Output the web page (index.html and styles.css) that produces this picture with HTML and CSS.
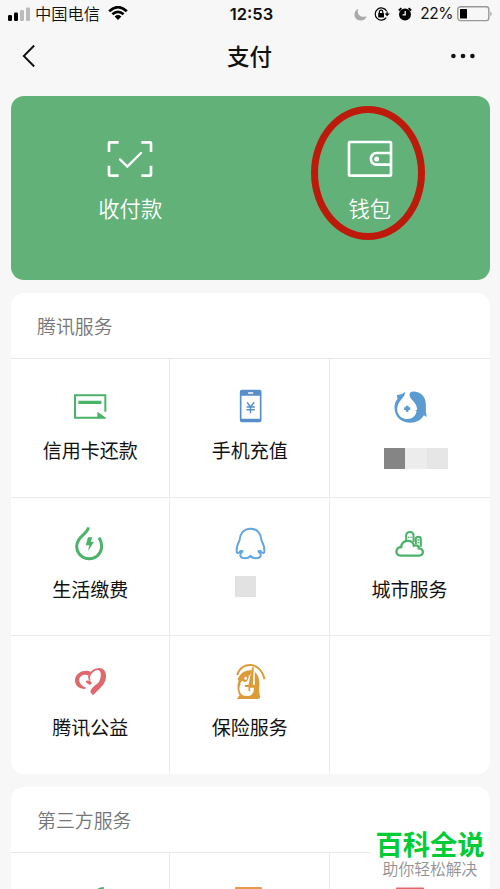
FILE: index.html
```html
<!DOCTYPE html>
<html lang="zh-CN">
<head>
<meta charset="utf-8">
<title>支付</title>
<link rel="stylesheet" href="styles.css">
</head>
<body>
<div class="screen">
  <header class="status">
    <div class="status-left">
      <svg class="signal" viewBox="0 0 22 14"><rect x="0" y="8" width="4" height="6" rx="1.2"/><rect x="6" y="5.5" width="4" height="8.5" rx="1.2"/><rect class="dim" x="12" y="3" width="4" height="11" rx="1.2"/><rect class="dim" x="18" y="0.5" width="4" height="13.5" rx="1.2"/></svg>
      <span class="carrier">中国电信</span>
      <svg class="wifi" viewBox="0 0 20 14"><path class="wave" d="M1.2 5.2Q10-2.8 18.8 5.2M4.4 8.3Q10 3.4 15.6 8.3"/><path d="M6.6 10.5Q10 7.6 13.4 10.5L10 13.9Z"/></svg>
    </div>
    <span class="clock">12:53</span>
    <div class="status-right">
      <svg class="moon" viewBox="0 0 14 14"><path d="M4.6 .8C-1.500 3.300-.8 13.500 7 13.500 10.500 13.500 12.800 11.600 13.500 8.800 7.500 11.500 2.300 6.500 4.600 .8Z"/></svg>
      <svg class="lock" viewBox="0 0 16 14"><path class="ring" d="M12.6 4A6.1 6.1 0 1 0 12.2 10.7M13.1 4.4V7.2"/><path d="M10.6 6.4H15.7L13.1 9.2Z"/><rect x="4.2" y="6" width="5.8" height="4.4" rx=".5"/><path class="ring" d="M5.4 6V4.8a1.7 1.7 0 0 1 3.4 0V6"/></svg>
      <svg class="alarm" viewBox="0 0 14 14"><circle cx="7" cy="7.4" r="6"/><path class="ear" d="M.8 3.5 3.4 1.2M13.2 3.5 10.6 1.2"/><path class="hand" d="M7.2 4V7.8H4.6"/></svg>
      <span class="percent">22%</span>
      <svg class="battery" viewBox="0 0 36 16"><rect class="shell" x=".8" y=".8" width="31" height="13.8" rx="2.6"/><rect x="3" y="3" width="7" height="9.5" rx=".6"/><path class="cap" d="M33.4 5.2Q35.8 7.7 33.4 10.2Z"/></svg>
    </div>
  </header>

  <nav class="nav">
    <svg class="back" viewBox="0 0 14 24"><path d="M12.2 1.5 1.8 12 12.2 22.5"/></svg>
    <h1>支付</h1>
    <svg class="more" viewBox="0 0 24 6"><circle cx="2.4" cy="3" r="2.3"/><circle cx="12" cy="3" r="2.3"/><circle cx="21.4" cy="3" r="2.3"/></svg>
  </nav>

  <main>
    <section class="hero">
      <div class="hero-item">
        <svg viewBox="82 150 138 114"><path d="M117 157H91Q88 157 88 160V186M185 157H211Q214 157 214 160V186M117 257H91Q88 257 88 254V227M185 257H211Q214 257 214 254V227"/><path class="round" d="M121 208 143 230 184 189"/></svg>
        <span>收付款</span>
      </div>
      <div class="hero-item">
        <svg viewBox="170 150 138 114"><rect x="176" y="156" width="126" height="101" rx="3"/><path d="M302 189H259A17.500 17.500 0 0 0 259 224H302"/><circle class="dot" cx="259" cy="207" r="7.500"/></svg>
        <span>钱包</span>
        <i class="highlight"></i>
      </div>
    </section>

    <section class="card">
      <h2>腾讯服务</h2>
      <div class="grid">
        <div class="cell green">
          <svg viewBox="210 318 120 120"><path class="line" d="M316 395V346H225V413H296"/><path d="M235 362H304V372H235ZM292 395 318 413V416H292Z"/></svg>
          <span>信用卡还款</span>
        </div>
        <div class="cell phone">
          <svg viewBox="88.500 48 120 120"><path fill-rule="evenodd" d="M124 59H177Q183 59 183 65V151Q183 157 177 157H124Q118 157 118 151V65Q118 59 124 59ZM123 77V146H178V77ZM143 67V71H158V67Z"/><path class="yen" d="M140 97 150 111 161 97M150 111V130M138 111H163M138 119H163"/></svg>
          <span>手机充值</span>
        </div>
        <div class="cell blue">
          <svg viewBox="118.500 48 120 120"><path d="M139 75Q153 76 163 66C166 82 141 91 140 116C140 135 153 147 170 147C186 147 197 137 198 123L194 121 200 119C199 94 178 91 177 74C177 63 190 63 202 67C220 74 228 90 226 114Q225 126 229 141L220 136C212 151 197 158 180 158C151 158 132 138 132 113C132 101 135 94 141 88Z"/><path d="M166 107H174V112H179V120H174V125H166V120H161V112H166Z"/></svg>
          <div class="mosaic"><i></i><i></i><i></i></div>
        </div>
        <div class="cell green">
          <svg viewBox="120 45 120 120"><path class="thick" d="M175 52C174 72 140 78 140 109A37.500 37.500 0 0 0 215 109Q215 94 207 83"/><path d="M174 82H187L182 95H192L174 124 178 106H167Z"/></svg>
          <span>生活缴费</span>
        </div>
        <div class="cell sky">
          <svg viewBox="598.500 45 120 120"><path class="qq" d="M660 56C639 56 628 72 627 91C622 101 616 114 619 127Q623 132 630 123L638 124Q632 126 630 132C625 148 652 147 660 138C668 147 695 148 690 132Q688 126 682 124L690 123Q697 132 701 127C704 114 698 101 693 91C692 72 681 56 660 56Z"/></svg>
          <div class="mosaic single"><i></i></div>
        </div>
        <div class="cell green">
          <svg viewBox="118.500 45 120 120"><path class="city" d="M150 137C133 137 134 111 152 111C155 87 187 88 190 107C204 103 206 112 205 115C221 116 221 137 206 137Z"/><path class="tower" d="M167 93V74Q170 66 178 66Q187 66 189 74V96M196 102V84Q198 80 204 80Q210 80 211 85V110"/><path class="windows" d="M172 82H176M180 82H184M201 90H207M201 98H207"/></svg>
          <span>城市服务</span>
        </div>
        <div class="cell red">
          <svg viewBox="90 39 120 120"><path d="M152 65C136 58 105 66 105 92C105 105 116 116 135 117L138 113C126 108 118 101 118 90C118 77 132 71 147 76Z"/><path d="M137 93Q145 90 151 94Q156 96 155 101Q151 106 146 103Q139 102 137 93Z"/><path d="M144 80C148 65 162 54 178 54C192 55 199 66 198 80C197 105 175 117 159 136L151 126C153 114 166 106 174 99C183 90 187 64 175 60C163 59 153 71 149 83L152 91 147 92Z"/></svg>
          <span>腾讯公益</span>
        </div>
        <div class="cell gold">
          <svg viewBox="568.500 39 120 120"><path class="umbrella" d="M590 75C602 34 660 32 672 88"/><path fill-rule="evenodd" d="M592 86C602 68 614 60 632 61V72C627 72 624 79 623 87Q621 96 613 97L606 92Q598 96 600 104C593 114 598 130 606 136Q613 138 620 138C636 138 641 126 640 113H629V124H624V111H613V105H624L635 52H640L637 104H643V66C656 76 658 92 656 112Q655 128 659 140Q660 147 650 147H591Q590 140 597 137C590 121 589 104 594 93ZM611 85A4.500 4.500 0 1 0 620 85A4.500 4.500 0 1 0 611 85Z"/></svg>
          <span>保险服务</span>
        </div>
        <div class="cell"></div>
      </div>
    </section>

    <section class="card">
      <h2>第三方服务</h2>
      <div class="grid">
        <div class="cell green"><svg viewBox="0 0 40 40"><path d="M27 9Q30 7 34 7Q33 18 20 20Q22 12 27 9Z"/></svg></div>
        <div class="cell orange"><svg viewBox="0 0 40 40"><rect x="5" y="7" width="27" height="28" rx="1"/></svg></div>
        <div class="cell red"><svg viewBox="0 0 40 40"><rect x="6" y="7.500" width="28" height="28" rx="1"/></svg></div>
      </div>
    </section>
  </main>
  <aside class="watermark"><strong>百科全说</strong><span>助你轻松解决</span></aside>
</div>
</body>
</html>
```
FILE: styles.css
```css
* { box-sizing: border-box; }
body {
  margin: 0;
  background: #f7f7f7;
  color: #111;
  font-family: "Noto Sans CJK SC", sans-serif;
}
svg { display: block; flex: none; }
.screen { position: relative; height: 889px; overflow: hidden; }

.status {
  display: grid;
  grid-template-columns: 1fr auto 1fr;
  align-items: center;
  height: 28px;
  padding: 0 7px 0 8px;
}
.status-left, .status-right { display: flex; align-items: center; }
.status-right { justify-content: flex-end; }
.signal { width: 22px; height: 14px; margin-top: -1px; }
.dim { fill: #bbb; }
.carrier { margin-left: 5px; font-size: 16.300px; font-weight: 350; line-height: 26px; margin-top: -2px; }
.wifi { width: 20px; height: 14px; margin-left: 8px; margin-top: -2px; }
.wave { fill: none; stroke: #000; stroke-width: 2.700; }
.clock { padding-left: 2px; font: 600 16.500px/28px Inter, sans-serif; }
.moon { width: 13px; height: 13px; fill: #aaa; }
.lock { width: 16px; height: 14px; margin-left: 7px; }
.ring { fill: none; stroke: #000; stroke-width: 1.200; }
.alarm { width: 14px; height: 14px; margin-left: 8px; }
.ear { stroke: #000; stroke-width: 1.800; }
.hand { fill: none; stroke: #fff; stroke-width: 1.200; }
.percent { margin-left: 8px; font: 15.500px/28px Inter, sans-serif; letter-spacing: -.5px; }
.battery { width: 36px; height: 16px; margin-left: 4px; }
.shell { fill: none; stroke: #999; stroke-width: 1.400; }
.cap { fill: #999; }

.nav {
  display: grid;
  grid-template-columns: 1fr auto 1fr;
  align-items: center;
  height: 56px;
  padding: 0 25px 0 22px;
}
.nav h1 { margin: -2px -1px 0 1px; font-size: 22.500px; font-weight: 500; line-height: 54px; }
.back { width: 14px; height: 24px; fill: none; stroke: #111; stroke-width: 1.900; }
.more { width: 24px; height: 6px; justify-self: end; fill: #111; }

main { padding: 12px 10.500px 0 10.500px; }
.hero {
  display: grid;
  grid-template-columns: 1fr 1fr;
  height: 184px;
  border-radius: 13px;
  background: #61b179;
}
.hero-item {
  position: relative;
  display: flex;
  flex-direction: column;
  align-items: center;
  padding-top: 44px;
  color: #fff;
  font-size: 21.300px;
  font-weight: 350;
  line-height: 30px;
}
.hero-item svg { width: 46px; height: 38px; margin-bottom: 15px; fill: none; stroke: #fff; stroke-width: 8; }
.hero-item .round { stroke-linecap: round; stroke-width: 7; }
.hero-item .dot { fill: #fff; stroke: none; }
.highlight {
  position: absolute;
  top: 10px;
  left: 61px;
  width: 114px;
  height: 134px;
  border: 7.500px solid #be1a0b;
  border-radius: 50%;
}

.card { margin-top: 13px; overflow: hidden; border-radius: 13px; background: #fff; }
.card h2 {
  height: 66px;
  margin: 0;
  padding-left: 26.500px;
  border-bottom: 1px solid #e8e8e8;
  color: #747679;
  font-size: 18.900px;
  font-weight: 350;
  line-height: 66px;
}
.grid { display: grid; grid-template-columns: 159px 160px 1fr; grid-template-rows: 139px 138px 138px; }
.cell {
  display: flex;
  flex-direction: column;
  align-items: center;
  padding: 27px 0 0 1.500px;
  border-right: 1px solid #ebebeb;
  border-bottom: 1px solid #ebebeb;
  fill: currentColor;
}
.cell:nth-child(3n) { padding-left: 0; border-right: 0; }
.cell:nth-child(n+7) { border-bottom: 0; }
.cell svg { width: 40px; height: 40px; margin-bottom: 10px; }
.cell span { color: #111; font-size: 19px; line-height: 28px; white-space: nowrap; }
.green { color: #4bb369; }
.phone { color: #588fcb; }
.blue { color: #5a9bd1; }
.sky { color: #62a5df; }
.red { color: #de686b; }
.gold { color: #dc9a38; }
.orange { color: #e69a4b; }
.line, .thick, .yen, .qq, .city, .tower, .windows, .umbrella { fill: none; stroke: currentColor; }
.line { stroke-width: 6; }
.thick { stroke-width: 9; }
.yen { stroke-width: 4.500; }
.qq { stroke-width: 6; }
.city { stroke-width: 7; }
.tower { stroke-width: 6; }
.windows { stroke-width: 4; }
.umbrella { stroke-width: 6; }

.mosaic { display: flex; margin: 12px 0 0 13px; }
.mosaic i { width: 21.500px; height: 21px; background: #ececec; }
.mosaic i:first-child { background: #858585; }
.mosaic i:last-child { background: #e6e6e6; }
.mosaic.single { margin: 1px 9px 0 0; }
.mosaic.single i { background: #e2e2e2; }

.watermark {
  position: absolute;
  right: 10px;
  bottom: 8px;
  display: flex;
  flex-direction: column;
  align-items: center;
  width: 120px;
  height: 57px;
  padding-top: 3px;
  background: #fff;
  white-space: nowrap;
}
.watermark strong { color: #00cc36; font-size: 27.300px; line-height: 32px; }
.watermark span { margin-top: 2px; color: #929292; font-size: 15.800px; font-weight: 350; line-height: 16px; }
```
